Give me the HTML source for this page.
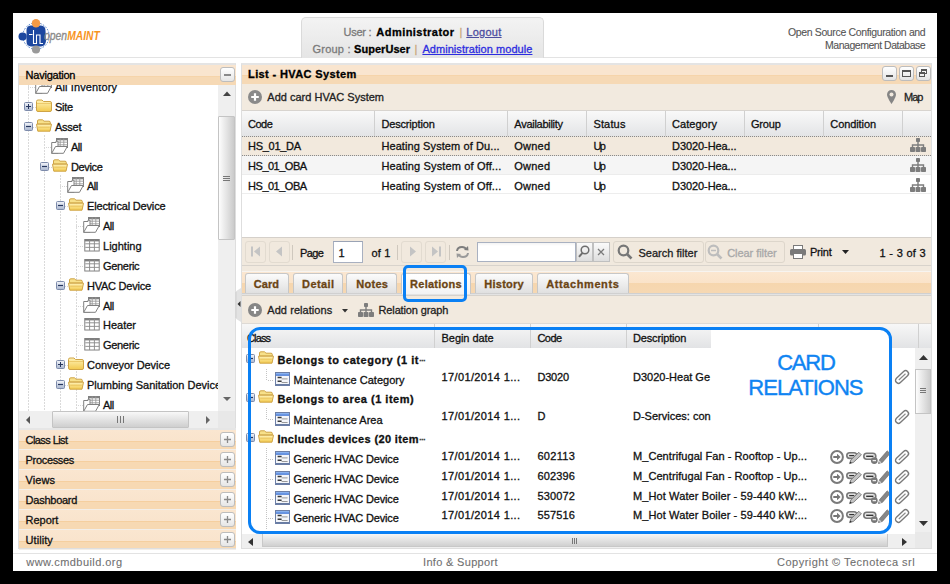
<!DOCTYPE html>
<html><head><meta charset="utf-8">
<style>
*{margin:0;padding:0;box-sizing:border-box}
html,body{width:950px;height:584px;overflow:hidden;background:#000}
body{font-family:"Liberation Sans",sans-serif;font-size:11px;color:#000;position:relative}
.a{position:absolute}
.t{position:absolute;white-space:nowrap;line-height:13px;-webkit-text-stroke:0.3px currentColor}
svg{position:absolute;overflow:visible}
</style></head><body>
<div class="a" style="left:13px;top:13px;width:924px;height:558px;background:#fff"></div>
<div class="a" style="left:13px;top:57px;width:924px;height:1px;background:#e3e3e3"></div>
<svg style="left:18px;top:18px" width="86" height="38" viewBox="0 0 86 38">
 <circle cx="18" cy="18" r="13.2" fill="none" stroke="#3a6fc0" stroke-width="0.9" stroke-dasharray="1.6 1.4"/>
 <path d="M8.5 12Q8.5 8 12.5 7.5L23 7.5Q27.5 8 27.5 12.5L28 23Q27.5 28 23 28.5L13 28.5Q8.5 28 8.5 23.5Z" fill="#1d48a0"/>
 <circle cx="18" cy="5.2" r="4.2" fill="#f39a45"/>
 <circle cx="4.6" cy="18.5" r="4.1" fill="#1d48a0"/>
 <circle cx="18" cy="31.5" r="4.1" fill="#9a9a9a"/>
 <path d="M11 16.5H14.5M15.5 12V25.5H18.5V17H22V25.5H25" fill="none" stroke="#fff" stroke-width="1.1"/>
 <text x="26" y="22" font-family="Liberation Sans" font-style="italic" font-size="12.5" fill="#8c8c8c" stroke="#8c8c8c" stroke-width="0.35" textLength="23" lengthAdjust="spacingAndGlyphs">open</text>
 <text x="49.3" y="22" font-family="Liberation Sans" font-style="italic" font-weight="bold" font-size="12.5" fill="#f7941e" textLength="32.5" lengthAdjust="spacingAndGlyphs">MAINT</text>
</svg>
<div class="a" style="left:301px;top:17px;width:243px;height:41px;border:1px solid #dadada;border-bottom:none;border-radius:5px 5px 0 0;background:linear-gradient(#f3f3f3,#e5e5e5)"></div>
<div class="t" style="left:343.50px;top:26.00px;font-size:11px;color:#7a7a7a;letter-spacing:-0.267px;">User :</div>
<div class="t" style="left:376.30px;top:26.00px;font-size:11px;color:#000;letter-spacing:0.465px;font-weight:bold;">Administrator</div>
<div class="t" style="left:459.50px;top:26.00px;font-size:11px;color:#c9a77a;">|</div>
<div class="t" style="left:466.30px;top:26.00px;font-size:11px;color:#4d4da0;letter-spacing:0.272px;text-decoration:underline">Logout</div>
<div class="t" style="left:312.60px;top:43.00px;font-size:11px;color:#7a7a7a;letter-spacing:0.203px;">Group :</div>
<div class="t" style="left:354.00px;top:43.00px;font-size:11px;color:#000;letter-spacing:0.046px;font-weight:bold;">SuperUser</div>
<div class="t" style="left:414.50px;top:43.00px;font-size:11px;color:#c9a77a;">|</div>
<div class="t" style="left:422.40px;top:43.00px;font-size:11px;color:#2d2de0;letter-spacing:0.059px;text-decoration:underline">Administration module</div>
<div class="t" style="left:787.90px;top:26.00px;font-size:10.5px;color:#555;letter-spacing:-0.353px;-webkit-text-stroke:0.1px currentColor">Open Source Configuration and</div>
<div class="t" style="left:825.00px;top:39.00px;font-size:10.5px;color:#555;letter-spacing:-0.469px;-webkit-text-stroke:0.1px currentColor">Management Database</div>
<div class="a" style="left:18px;top:63px;width:218px;height:486px;border:1px solid #dedede;border-top:2px solid #e4e4e4;background:#fff"></div>
<div class="a" style="left:19px;top:65px;width:217px;height:20px;background:linear-gradient(#f9e5cf 0,#f9e5cf 11px,#f5cf9f 11px,#f6d9b5 12px,#f6d9b5 20px)"></div>
<div class="t" style="left:25.60px;top:69.00px;font-size:11px;color:#000;letter-spacing:-0.241px;">Navigation</div>
<div class="a" style="left:220px;top:67px;width:15px;height:15px;border:1px solid #bdbdbd;border-radius:3px;background:linear-gradient(#fff,#e6e6e6)"><div class="a" style="left:3px;top:6px;width:7px;height:2px;background:#8a8a8a"></div></div>
<div class="a" style="left:241px;top:63px;width:691px;height:486px;border:1px solid #dedede;border-top:2px solid #e4e4e4;background:#fff"></div>
<div class="a" style="left:242px;top:65px;width:689px;height:19px;background:linear-gradient(#f9e5cf 0,#f9e5cf 10px,#f5cf9f 10px,#f6d9b5 11px,#f6d9b5 19px,#f3dcc0 20px)"></div>
<div class="t" style="left:248.10px;top:68.00px;font-size:11px;color:#000;letter-spacing:0.372px;font-weight:bold;">List - HVAC System</div>
<div class="a" style="left:882px;top:66px;width:15px;height:15px;border:1px solid #bdbdbd;border-radius:3px;background:linear-gradient(#fff,#e4e4e4)"></div>
<div class="a" style="left:899px;top:66px;width:15px;height:15px;border:1px solid #bdbdbd;border-radius:3px;background:linear-gradient(#fff,#e4e4e4)"></div>
<div class="a" style="left:916px;top:66px;width:15px;height:15px;border:1px solid #bdbdbd;border-radius:3px;background:linear-gradient(#fff,#e4e4e4)"></div>
<div class="a" style="left:886px;top:75px;width:7px;height:2px;background:#555"></div>
<div class="a" style="left:902px;top:70px;width:9px;height:7px;border:1px solid #555;border-top-width:2px"></div>
<div class="a" style="left:921px;top:69px;width:6px;height:5px;border:1px solid #555;border-top-width:2px"></div>
<div class="a" style="left:919px;top:72px;width:6px;height:5px;border:1px solid #555;border-top-width:2px;background:#eee"></div>
<div class="a" style="left:242px;top:84px;width:689px;height:27px;background:#f2eadf;border-bottom:1px solid #d8d4cf"></div>
<svg style="left:248px;top:90px" width="14" height="14"><circle cx="7" cy="7" r="7" fill="#8a8a8a"/><path d="M7 3.2V10.8M3.2 7H10.8" stroke="#fff" stroke-width="2.2"/></svg>
<div class="t" style="left:267.30px;top:91.00px;font-size:11px;color:#222;letter-spacing:0.008px;">Add card HVAC System</div>
<svg style="left:887px;top:90px" width="9" height="14" viewBox="0 0 9 14"><path d="M4.5 0C2 0 0 2 0 4.5C0 7.5 4.5 14 4.5 14S9 7.5 9 4.5C9 2 7 0 4.5 0Z" fill="#858585"/><circle cx="4.5" cy="4.5" r="2" fill="#f1e9de"/></svg>
<div class="t" style="left:904.00px;top:91.00px;font-size:11px;color:#222;letter-spacing:-0.998px;">Map</div>
<svg width="0" height="0" style="left:0;top:0"><defs>
<linearGradient id="gexp" x1="0" y1="0" x2="0" y2="1"><stop offset="0" stop-color="#f4f6fb"/><stop offset="1" stop-color="#a9b6cf"/></linearGradient>
<linearGradient id="gfold" x1="0" y1="0" x2="0" y2="1"><stop offset="0" stop-color="#fff3b8"/><stop offset="1" stop-color="#f2c94e"/></linearGradient>
<linearGradient id="gthumbv" x1="0" y1="0" x2="1" y2="0"><stop offset="0" stop-color="#fbfbfb"/><stop offset="1" stop-color="#cfcfcf"/></linearGradient>
<symbol id="plus" viewBox="0 0 9 9"><rect x="0.5" y="0.5" width="8" height="8" rx="1" fill="url(#gexp)" stroke="#7d8bab"/><path d="M2 4.5H7M4.5 2V7" stroke="#26365f" stroke-width="1"/></symbol>
<symbol id="minus" viewBox="0 0 9 9"><rect x="0.5" y="0.5" width="8" height="8" rx="1" fill="url(#gexp)" stroke="#7d8bab"/><path d="M2 4.5H7" stroke="#26365f" stroke-width="1.2"/></symbol>
<symbol id="fclosed" viewBox="0 0 16 13"><path d="M0.5 2.5Q0.5 1 2 1H6L7.5 2.5H14Q15.5 2.5 15.5 4V11Q15.5 12.5 14 12.5H2Q0.5 12.5 0.5 11Z" fill="url(#gfold)" stroke="#cfa446"/><path d="M1 4.5H15" stroke="#e9c360" stroke-width="0.8"/></symbol>
<symbol id="fopen" viewBox="0 0 16 13"><path d="M1.5 2Q1.5 0.8 2.8 0.8H6.5L8 2.2H13Q14.3 2.2 14.3 3.5V5H1.5Z" fill="#f7e08a" stroke="#cfa446"/><path d="M0.5 5.2H15.5L14 12.2H1.8Z" fill="url(#gfold)" stroke="#cfa446" stroke-linejoin="round"/><path d="M2.2 8.2H13.8" stroke="#e6bc50" stroke-width="0.8"/></symbol>
<symbol id="allic" viewBox="0 0 17 16"><rect x="5.5" y="0.5" width="11" height="9" fill="#fff" stroke="#808080"/><path d="M5.5 1.6H16.5" stroke="#808080" stroke-width="1.4"/><path d="M9.2 0.5V9.5M12.8 0.5V9.5M5.5 4.2H16.5M5.5 6.8H16.5" stroke="#9a9a9a" stroke-width="0.9"/><path d="M0.7 4.5H5V3.2H7V15.3H0.7Z" fill="#fff" stroke="#808080"/><path d="M0.7 15.3L4.5 8.5H16.3L12.5 15.3Z" fill="#fff" stroke="#808080" stroke-linejoin="round"/></symbol>
<symbol id="gridic" viewBox="0 0 16 13"><rect x="0.5" y="0.5" width="15" height="12" fill="#fff" stroke="#7e7e7e"/><path d="M0.5 1.5H15.5" stroke="#7e7e7e" stroke-width="2"/><path d="M5.5 1V12.5M10.5 1V12.5M1 5H15.5M1 8.7H15.5" stroke="#8e8e8e" stroke-width="1"/></symbol>
<symbol id="cardic" viewBox="0 0 15 14"><linearGradient id="gcard" x1="0" y1="0" x2="0" y2="1"><stop offset="0" stop-color="#9cc0f4"/><stop offset="1" stop-color="#3a70d4"/></linearGradient><rect x="0.5" y="0.5" width="14" height="13" fill="#f4f6fa" stroke="#6d7fa6"/><rect x="1" y="1" width="13" height="2.8" fill="url(#gcard)"/><path d="M2.6 5.6H6.6M2.6 9.2H6.6" stroke="#3a3a3a" stroke-width="1.5"/><path d="M6.6 6.9H12.6M6.6 10.5H12.6" stroke="#9a9a9a" stroke-width="1"/><path d="M1 12.6H14" stroke="#5a6f9a" stroke-width="1"/></symbol>
<symbol id="hier" viewBox="0 0 16 14"><rect x="6" y="0" width="4" height="4" rx="0.8" fill="#7d7d7d"/><path d="M8 4V7M2.5 9V7H13.5V9M8 7V9" stroke="#7d7d7d" stroke-width="1.4" fill="none"/><rect x="0" y="9" width="5" height="5" rx="0.8" fill="#7d7d7d"/><rect x="5.5" y="9" width="5" height="5" rx="0.8" fill="#7d7d7d"/><rect x="11" y="9" width="5" height="5" rx="0.8" fill="#7d7d7d"/></symbol>
<symbol id="plusc" viewBox="0 0 14 14"><circle cx="7" cy="7" r="7" fill="#868686"/><path d="M7 3.3V10.7M3.3 7H10.7" stroke="#fff" stroke-width="2.2"/></symbol>
<symbol id="clip" viewBox="0 0 14 14"><g transform="rotate(-43 7 7)"><rect x="-0.8" y="4.1" width="15.6" height="5.8" rx="2.9" fill="#fff" stroke="#7a7a7a" stroke-width="1.4"/><path d="M2.6 7H11.8" stroke="#8a8a8a" stroke-width="1.1"/></g></symbol>
<symbol id="goic" viewBox="0 0 14 14"><circle cx="7" cy="7" r="5.9" fill="#fff" stroke="#7a7a7a" stroke-width="2"/><path d="M3.3 6.1H7V3.8L10.6 7L7 10.2V7.9H3.3Z" fill="#767676"/></symbol>
<symbol id="linkedit" viewBox="0 0 16 14"><rect x="0.8" y="2.8" width="10" height="5.6" rx="2.8" fill="#e6e6e6" stroke="#777" stroke-width="1.6"/><path d="M3.2 5.6H8.3" stroke="#333" stroke-width="1.3"/><path d="M3.6 13.6L4.8 10L12.8 2.3L15.4 4.9L7.4 12.4Z" fill="#c4c4c4" stroke="#777" stroke-width="0.9" stroke-linejoin="round"/><path d="M3.6 13.6L4.3 11.4L5.9 12.9Z" fill="#2e2e2e"/></symbol>
<symbol id="linkdel" viewBox="0 0 15 14"><rect x="0.8" y="3.3" width="12" height="6" rx="3" fill="#e6e6e6" stroke="#777" stroke-width="1.6"/><path d="M3.2 6.3H10.4" stroke="#333" stroke-width="1.4"/><circle cx="11.3" cy="10.6" r="3.4" fill="#777"/><path d="M9.6 10.6H13" stroke="#eee" stroke-width="1.3"/></symbol>
<symbol id="pencil" viewBox="0 0 12 14"><path d="M0.5 13.5L1.6 9.6L9.2 0.8L12 3.6L4.4 12.4Z" fill="#878787" stroke="#6a6a6a" stroke-width="0.6" stroke-linejoin="round"/><path d="M0.6 13.4L1.4 10.6L3.4 12.6Z" fill="#d8d8d8"/><path d="M0.5 13.5L1 12.2L1.8 13Z" fill="#333"/></symbol>
</defs></svg>
<div class="a" style="left:242px;top:111px;width:689px;height:25px;background:linear-gradient(#f9f9f9,#e3e4e6);"></div>
<div class="a" style="left:374px;top:111px;width:1px;height:25px;background:#d0d0d0"></div>
<div class="a" style="left:507px;top:111px;width:1px;height:25px;background:#d0d0d0"></div>
<div class="a" style="left:586px;top:111px;width:1px;height:25px;background:#d0d0d0"></div>
<div class="a" style="left:665px;top:111px;width:1px;height:25px;background:#d0d0d0"></div>
<div class="a" style="left:744px;top:111px;width:1px;height:25px;background:#d0d0d0"></div>
<div class="a" style="left:823px;top:111px;width:1px;height:25px;background:#d0d0d0"></div>
<div class="a" style="left:902px;top:111px;width:1px;height:25px;background:#d0d0d0"></div>
<div class="t" style="left:248.10px;top:118.00px;font-size:11px;color:#111;letter-spacing:-0.532px;">Code</div>
<div class="t" style="left:381.40px;top:118.00px;font-size:11px;color:#111;letter-spacing:-0.162px;">Description</div>
<div class="t" style="left:514.30px;top:118.00px;font-size:11px;color:#111;letter-spacing:-0.279px;">Availability</div>
<div class="t" style="left:593.40px;top:118.00px;font-size:11px;color:#111;letter-spacing:0.163px;">Status</div>
<div class="t" style="left:672.10px;top:118.00px;font-size:11px;color:#111;letter-spacing:0.024px;">Category</div>
<div class="t" style="left:750.90px;top:118.00px;font-size:11px;color:#111;letter-spacing:-0.142px;">Group</div>
<div class="t" style="left:830.30px;top:118.00px;font-size:11px;color:#111;letter-spacing:-0.084px;">Condition</div>
<div class="a" style="left:242px;top:136px;width:689px;height:1px;background:repeating-linear-gradient(90deg,#8a8a8a 0 1px,#e8e2da 1px 2px)"></div>
<div class="a" style="left:242px;top:137px;width:689px;height:18px;background:#f2e9dd"></div>
<div class="a" style="left:242px;top:155px;width:689px;height:1px;background:repeating-linear-gradient(90deg,#8a8a8a 0 1px,#e8e2da 1px 2px)"></div>
<div class="a" style="left:242px;top:156px;width:689px;height:19px;background:#f5f5f5;border-bottom:1px solid #ececec"></div>
<div class="a" style="left:242px;top:175px;width:689px;height:19px;background:#fff;border-bottom:1px solid #ededed"></div>
<div class="t" style="left:248.10px;top:140.00px;font-size:11px;color:#111;letter-spacing:-0.304px;">HS_01_DA</div>
<div class="t" style="left:381.40px;top:140.00px;font-size:11px;color:#111;letter-spacing:0.093px;">Heating System of Du...</div>
<div class="t" style="left:514.30px;top:140.00px;font-size:11px;color:#111;letter-spacing:0.212px;">Owned</div>
<div class="t" style="left:593.40px;top:140.00px;font-size:11px;color:#111;letter-spacing:-1.461px;">Up</div>
<div class="t" style="left:672.10px;top:140.00px;font-size:11px;color:#111;letter-spacing:-0.084px;">D3020-Hea...</div>
<svg style="left:910px;top:138px" width="16" height="14" viewBox="0 0 16 14"><rect x="6" y="0" width="4" height="4" rx="0.8" fill="#7d7d7d"/><path d="M8 4V7M2.5 9V7H13.5V9M8 7V9" stroke="#7d7d7d" stroke-width="1.4" fill="none"/><rect x="0" y="9" width="5" height="5" rx="0.8" fill="#7d7d7d"/><rect x="5.5" y="9" width="5" height="5" rx="0.8" fill="#7d7d7d"/><rect x="11" y="9" width="5" height="5" rx="0.8" fill="#7d7d7d"/></svg>
<div class="t" style="left:248.10px;top:160.00px;font-size:11px;color:#111;letter-spacing:-0.498px;">HS_01_OBA</div>
<div class="t" style="left:381.40px;top:160.00px;font-size:11px;color:#111;letter-spacing:0.145px;">Heating System of Off...</div>
<div class="t" style="left:514.30px;top:160.00px;font-size:11px;color:#111;letter-spacing:0.212px;">Owned</div>
<div class="t" style="left:593.40px;top:160.00px;font-size:11px;color:#111;letter-spacing:-1.461px;">Up</div>
<div class="t" style="left:672.10px;top:160.00px;font-size:11px;color:#111;letter-spacing:-0.084px;">D3020-Hea...</div>
<svg style="left:910px;top:158px" width="16" height="14" viewBox="0 0 16 14"><rect x="6" y="0" width="4" height="4" rx="0.8" fill="#7d7d7d"/><path d="M8 4V7M2.5 9V7H13.5V9M8 7V9" stroke="#7d7d7d" stroke-width="1.4" fill="none"/><rect x="0" y="9" width="5" height="5" rx="0.8" fill="#7d7d7d"/><rect x="5.5" y="9" width="5" height="5" rx="0.8" fill="#7d7d7d"/><rect x="11" y="9" width="5" height="5" rx="0.8" fill="#7d7d7d"/></svg>
<div class="t" style="left:248.10px;top:180.00px;font-size:11px;color:#111;letter-spacing:-0.498px;">HS_01_OBA</div>
<div class="t" style="left:381.40px;top:180.00px;font-size:11px;color:#111;letter-spacing:0.145px;">Heating System of Off...</div>
<div class="t" style="left:514.30px;top:180.00px;font-size:11px;color:#111;letter-spacing:0.212px;">Owned</div>
<div class="t" style="left:593.40px;top:180.00px;font-size:11px;color:#111;letter-spacing:-1.461px;">Up</div>
<div class="t" style="left:672.10px;top:180.00px;font-size:11px;color:#111;letter-spacing:-0.084px;">D3020-Hea...</div>
<svg style="left:910px;top:178px" width="16" height="14" viewBox="0 0 16 14"><rect x="6" y="0" width="4" height="4" rx="0.8" fill="#7d7d7d"/><path d="M8 4V7M2.5 9V7H13.5V9M8 7V9" stroke="#7d7d7d" stroke-width="1.4" fill="none"/><rect x="0" y="9" width="5" height="5" rx="0.8" fill="#7d7d7d"/><rect x="5.5" y="9" width="5" height="5" rx="0.8" fill="#7d7d7d"/><rect x="11" y="9" width="5" height="5" rx="0.8" fill="#7d7d7d"/></svg>
<div class="a" style="left:242px;top:237px;width:689px;height:1px;background:#d5d0ca"></div>
<div class="a" style="left:242px;top:238px;width:689px;height:33px;background:#f1e9de"></div>
<div class="a" style="left:242px;top:265px;width:689px;height:1px;background:#d8d3cc"></div>
<div class="a" style="left:244.5px;top:241px;width:21px;height:22px;border:1px solid #e2dbd0;border-radius:3px;"></div>
<div class="a" style="left:268.5px;top:241px;width:21px;height:22px;border:1px solid #e2dbd0;border-radius:3px;"></div>
<svg style="left:251px;top:246px" width="10" height="11"><rect x="0" y="0.5" width="2" height="10" fill="#c4c4c4"/><path d="M9 0.5V10.5L3 5.5Z" fill="#c4c4c4"/></svg>
<svg style="left:275px;top:246px" width="10" height="11"><path d="M7 0.5V10.5L1 5.5Z" fill="#c4c4c4"/></svg>
<div class="a" style="left:292px;top:245px;width:1px;height:15px;background:#cfc8be"></div>
<div class="t" style="left:300.10px;top:247.00px;font-size:11px;color:#111;letter-spacing:-0.629px;">Page</div>
<div class="a" style="left:333px;top:241px;width:30px;height:22px;background:linear-gradient(#fff,#fff);border:1px solid #a8b0c0;border-top-color:#9aa3b5"></div>
<div class="t" style="left:338.50px;top:247.00px;font-size:11px;color:#111;">1</div>
<div class="t" style="left:371.40px;top:247.00px;font-size:11px;color:#111;letter-spacing:0.185px;">of 1</div>
<div class="a" style="left:397px;top:245px;width:1px;height:15px;background:#cfc8be"></div>
<div class="a" style="left:401px;top:241px;width:21px;height:22px;border:1px solid #e2dbd0;border-radius:3px;"></div>
<div class="a" style="left:425px;top:241px;width:21px;height:22px;border:1px solid #e2dbd0;border-radius:3px;"></div>
<svg style="left:408px;top:246px" width="10" height="11"><path d="M2 0.5V10.5L8 5.5Z" fill="#c4c4c4"/></svg>
<svg style="left:431px;top:246px" width="10" height="11"><path d="M1 0.5V10.5L7 5.5Z" fill="#c4c4c4"/><rect x="8" y="0.5" width="2" height="10" fill="#c4c4c4"/></svg>
<div class="a" style="left:449px;top:245px;width:1px;height:15px;background:#cfc8be"></div>
<svg style="left:455px;top:245px" width="15" height="14" viewBox="0 0 15 14"><path d="M2 6Q2.5 2 7 2Q10 2 11.5 4.5" fill="none" stroke="#7d7d7d" stroke-width="2"/><path d="M9 5L13.5 5.5L13 1Z" fill="#7d7d7d"/><path d="M13 8Q12.5 12 8 12Q5 12 3.5 9.5" fill="none" stroke="#9a9a9a" stroke-width="2"/><path d="M6 9L1.5 8.5L2 13Z" fill="#9a9a9a"/></svg>
<div class="a" style="left:477px;top:242px;width:99px;height:20px;background:linear-gradient(#f3f3f3 0,#fff 3px);border:1px solid #a9b1c1"></div>
<div class="a" style="left:575.5px;top:242px;width:17px;height:20px;background:linear-gradient(#fafafa,#dedede);border:1px solid #c0c0c0"></div>
<svg style="left:578px;top:245px" width="12" height="13" viewBox="0 0 12 13"><circle cx="7" cy="5" r="3.8" fill="none" stroke="#6e6e6e" stroke-width="1.5"/><path d="M4.5 7.8L1 11.8" stroke="#6e6e6e" stroke-width="2"/></svg>
<div class="a" style="left:592.5px;top:242px;width:17px;height:20px;background:linear-gradient(#fafafa,#dedede);border:1px solid #c0c0c0"></div>
<svg style="left:597px;top:248px" width="8" height="8"><path d="M1 1L7 7M7 1L1 7" stroke="#7a7a7a" stroke-width="1.3"/></svg>
<div class="a" style="left:612.5px;top:241px;width:91px;height:22px;border:1px solid #ddd6cb;border-radius:3px"></div>
<svg style="left:617px;top:244px" width="16" height="16" viewBox="0 0 16 16"><circle cx="6.5" cy="6.5" r="4.8" fill="none" stroke="#777" stroke-width="2.2"/><path d="M10 10L14.5 14.5" stroke="#777" stroke-width="2.6"/></svg>
<div class="t" style="left:638.40px;top:247.00px;font-size:11px;color:#222;letter-spacing:0.018px;">Search filter</div>
<div class="a" style="left:704.5px;top:241px;width:80px;height:22px;border:1px solid #ddd6cb;border-radius:3px"></div>
<svg style="left:707px;top:244px" width="16" height="16" viewBox="0 0 16 16"><circle cx="6.5" cy="6.5" r="4.8" fill="none" stroke="#bdbdbd" stroke-width="2.2"/><path d="M10 10L14.5 14.5" stroke="#bdbdbd" stroke-width="2.6"/><path d="M4 6.5H9" stroke="#bdbdbd" stroke-width="1.5"/></svg>
<div class="t" style="left:727.20px;top:247.00px;font-size:11px;color:#a8a8a8;letter-spacing:-0.056px;">Clear filter</div>
<svg style="left:790px;top:245px" width="16" height="14" viewBox="0 0 16 14"><rect x="3.5" y="0.5" width="9" height="4" fill="#fff" stroke="#7a7a7a"/><rect x="0" y="4" width="16" height="6.5" rx="1.5" fill="#7a7a7a"/><rect x="3.5" y="8.5" width="9" height="5" fill="#fff" stroke="#7a7a7a"/></svg>
<div class="t" style="left:810.00px;top:246.00px;font-size:11px;color:#111;letter-spacing:-0.229px;">Print</div>
<svg style="left:842px;top:250px" width="7" height="4"><path d="M0 0H7L3.5 4Z" fill="#222"/></svg>
<div class="t" style="left:879.50px;top:247.00px;font-size:11px;color:#111;letter-spacing:0.310px;">1 - 3 of 3</div>
<div class="a" style="left:242px;top:271px;width:689px;height:1px;background:#f7f4f0"></div>
<div class="a" style="left:242px;top:272px;width:689px;height:21px;background:linear-gradient(#fbe7d1 0,#fae3c9 11px,#f6d6ae 11px,#f6d8b3 100%)"></div>
<div class="a" style="left:242px;top:293px;width:689px;height:3px;background:#e3e3e3;border-top:1px solid #d0d0d0;border-bottom:1px solid #d6d2cc"></div>
<div class="a" style="left:244.6px;top:273px;width:44.20000000000002px;height:20px;background:linear-gradient(#fbfbfb,#e0e0e0);border:1px solid #c7c7c7;border-bottom:none;border-radius:3px 3px 0 0"></div>
<div class="t" style="left:253.70px;top:278.00px;font-size:11px;color:#6b4514;letter-spacing:0.080px;font-weight:bold;">Card</div>
<div class="a" style="left:292.6px;top:273px;width:50.599999999999966px;height:20px;background:linear-gradient(#fbfbfb,#e0e0e0);border:1px solid #c7c7c7;border-bottom:none;border-radius:3px 3px 0 0"></div>
<div class="t" style="left:302.10px;top:278.00px;font-size:11px;color:#6b4514;letter-spacing:0.409px;font-weight:bold;">Detail</div>
<div class="a" style="left:346.3px;top:273px;width:51.0px;height:20px;background:linear-gradient(#fbfbfb,#e0e0e0);border:1px solid #c7c7c7;border-bottom:none;border-radius:3px 3px 0 0"></div>
<div class="t" style="left:356.20px;top:278.00px;font-size:11px;color:#6b4514;letter-spacing:0.310px;font-weight:bold;">Notes</div>
<div class="a" style="left:401px;top:273px;width:70px;height:21px;background:linear-gradient(#ffffff,#f3f3f3);border:1px solid #c7c7c7;border-bottom:none;border-radius:3px 3px 0 0"></div>
<div class="t" style="left:410.10px;top:278.00px;font-size:11px;color:#6b4514;letter-spacing:0.249px;font-weight:bold;">Relations</div>
<div class="a" style="left:474.8px;top:273px;width:58.400000000000034px;height:20px;background:linear-gradient(#fbfbfb,#e0e0e0);border:1px solid #c7c7c7;border-bottom:none;border-radius:3px 3px 0 0"></div>
<div class="t" style="left:484.30px;top:278.00px;font-size:11px;color:#6b4514;letter-spacing:0.251px;font-weight:bold;">History</div>
<div class="a" style="left:537px;top:273px;width:92px;height:20px;background:linear-gradient(#fbfbfb,#e0e0e0);border:1px solid #c7c7c7;border-bottom:none;border-radius:3px 3px 0 0"></div>
<div class="t" style="left:546.20px;top:278.00px;font-size:11px;color:#6b4514;letter-spacing:0.598px;font-weight:bold;">Attachments</div>
<div class="a" style="left:242px;top:296px;width:689px;height:28px;background:#f2eadf;border-bottom:1px solid #dedad5"></div>
<svg style="left:248px;top:303px" width="14" height="14" viewBox="0 0 14 14"><circle cx="7" cy="7" r="7" fill="#868686"/><path d="M7 3.3V10.7M3.3 7H10.7" stroke="#fff" stroke-width="2.2"/></svg>
<div class="t" style="left:267.30px;top:304.00px;font-size:11px;color:#222;letter-spacing:0.058px;">Add relations</div>
<svg style="left:342px;top:309px" width="6" height="4"><path d="M0 0H6L3 3.5Z" fill="#333"/></svg>
<svg style="left:358px;top:302.5px" width="16" height="14" viewBox="0 0 16 14"><rect x="6" y="0" width="4" height="4" rx="0.8" fill="#7d7d7d"/><path d="M8 4V7M2.5 9V7H13.5V9M8 7V9" stroke="#7d7d7d" stroke-width="1.4" fill="none"/><rect x="0" y="9" width="5" height="5" rx="0.8" fill="#7d7d7d"/><rect x="5.5" y="9" width="5" height="5" rx="0.8" fill="#7d7d7d"/><rect x="11" y="9" width="5" height="5" rx="0.8" fill="#7d7d7d"/></svg>
<div class="t" style="left:378.50px;top:304.00px;font-size:11px;color:#222;letter-spacing:-0.126px;">Relation graph</div>
<div class="a" style="left:242px;top:324px;width:689px;height:224px;background:#fff"></div>
<div class="a" style="left:242px;top:324px;width:689px;height:24px;background:linear-gradient(#f7f7f7,#e2e3e5)"></div>
<div class="a" style="left:434px;top:324px;width:1px;height:24px;background:#d0d0d0"></div>
<div class="a" style="left:530px;top:324px;width:1px;height:24px;background:#d0d0d0"></div>
<div class="a" style="left:626px;top:324px;width:1px;height:24px;background:#d0d0d0"></div>
<div class="a" style="left:818px;top:324px;width:1px;height:24px;background:#d0d0d0"></div>
<div class="a" style="left:918px;top:324px;width:1px;height:24px;background:#d0d0d0"></div>
<div class="t" style="left:247.00px;top:332.00px;font-size:11px;color:#111;letter-spacing:-0.876px;">Class</div>
<div class="t" style="left:441.60px;top:332.00px;font-size:11px;color:#111;letter-spacing:-0.066px;">Begin date</div>
<div class="t" style="left:537.40px;top:332.00px;font-size:11px;color:#111;letter-spacing:-0.532px;">Code</div>
<div class="t" style="left:633.00px;top:332.00px;font-size:11px;color:#111;letter-spacing:-0.162px;">Description</div>
<div class="a" style="left:266px;top:369px;width:1px;height:12px;background:repeating-linear-gradient(#c4c4c4 0 1px,transparent 1px 2px)"></div>
<div class="a" style="left:266px;top:408px;width:1px;height:12px;background:repeating-linear-gradient(#c4c4c4 0 1px,transparent 1px 2px)"></div>
<div class="a" style="left:266px;top:448px;width:1px;height:82px;background:repeating-linear-gradient(#c4c4c4 0 1px,transparent 1px 2px)"></div>
<div class="a" style="left:268px;top:380px;width:6px;height:1px;background:repeating-linear-gradient(90deg,#c4c4c4 0 1px,transparent 1px 2px)"></div>
<div class="a" style="left:268px;top:419px;width:6px;height:1px;background:repeating-linear-gradient(90deg,#c4c4c4 0 1px,transparent 1px 2px)"></div>
<div class="a" style="left:268px;top:459px;width:6px;height:1px;background:repeating-linear-gradient(90deg,#c4c4c4 0 1px,transparent 1px 2px)"></div>
<div class="a" style="left:268px;top:479px;width:6px;height:1px;background:repeating-linear-gradient(90deg,#c4c4c4 0 1px,transparent 1px 2px)"></div>
<div class="a" style="left:268px;top:499px;width:6px;height:1px;background:repeating-linear-gradient(90deg,#c4c4c4 0 1px,transparent 1px 2px)"></div>
<div class="a" style="left:268px;top:518px;width:6px;height:1px;background:repeating-linear-gradient(90deg,#c4c4c4 0 1px,transparent 1px 2px)"></div>
<svg style="left:246px;top:354px" width="9" height="9" viewBox="0 0 9 9"><rect x="0.5" y="0.5" width="8" height="8" rx="1" fill="url(#gexp)" stroke="#7d8bab"/><path d="M2 4.5H7" stroke="#26365f" stroke-width="1.2"/></svg>
<svg style="left:258px;top:351px" width="16" height="13" viewBox="0 0 16 13"><path d="M1.5 2Q1.5 0.8 2.8 0.8H6.5L8 2.2H13Q14.3 2.2 14.3 3.5V5H1.5Z" fill="#f7e08a" stroke="#cfa446"/><path d="M0.5 5.2H15.5L14 12.2H1.8Z" fill="url(#gfold)" stroke="#cfa446" stroke-linejoin="round"/><path d="M2.2 8.2H13.8" stroke="#e6bc50" stroke-width="0.8"/></svg>
<div class="t" style="left:277.40px;top:354.00px;font-size:11px;color:#111;letter-spacing:0.527px;font-weight:bold;">Belongs to category (1 it</div>
<svg style="left:246px;top:393px" width="9" height="9" viewBox="0 0 9 9"><rect x="0.5" y="0.5" width="8" height="8" rx="1" fill="url(#gexp)" stroke="#7d8bab"/><path d="M2 4.5H7" stroke="#26365f" stroke-width="1.2"/></svg>
<svg style="left:258px;top:390px" width="16" height="13" viewBox="0 0 16 13"><path d="M1.5 2Q1.5 0.8 2.8 0.8H6.5L8 2.2H13Q14.3 2.2 14.3 3.5V5H1.5Z" fill="#f7e08a" stroke="#cfa446"/><path d="M0.5 5.2H15.5L14 12.2H1.8Z" fill="url(#gfold)" stroke="#cfa446" stroke-linejoin="round"/><path d="M2.2 8.2H13.8" stroke="#e6bc50" stroke-width="0.8"/></svg>
<div class="t" style="left:277.40px;top:393.00px;font-size:11px;color:#111;letter-spacing:0.501px;font-weight:bold;">Belongs to area (1 item)</div>
<svg style="left:246px;top:432.5px" width="9" height="9" viewBox="0 0 9 9"><rect x="0.5" y="0.5" width="8" height="8" rx="1" fill="url(#gexp)" stroke="#7d8bab"/><path d="M2 4.5H7" stroke="#26365f" stroke-width="1.2"/></svg>
<svg style="left:258px;top:429.5px" width="16" height="13" viewBox="0 0 16 13"><path d="M1.5 2Q1.5 0.8 2.8 0.8H6.5L8 2.2H13Q14.3 2.2 14.3 3.5V5H1.5Z" fill="#f7e08a" stroke="#cfa446"/><path d="M0.5 5.2H15.5L14 12.2H1.8Z" fill="url(#gfold)" stroke="#cfa446" stroke-linejoin="round"/><path d="M2.2 8.2H13.8" stroke="#e6bc50" stroke-width="0.8"/></svg>
<div class="t" style="left:277.40px;top:432.50px;font-size:11px;color:#111;letter-spacing:0.348px;font-weight:bold;">Includes devices (20 item</div>
<div class="t" style="left:418.60px;top:354.00px;font-size:11px;color:#333;letter-spacing:-1.744px;">···</div>
<div class="t" style="left:418.60px;top:432.50px;font-size:11px;color:#333;letter-spacing:-1.744px;">···</div>
<svg style="left:274.6px;top:372px" width="15" height="14" viewBox="0 0 15 14"><linearGradient id="gcard" x1="0" y1="0" x2="0" y2="1"><stop offset="0" stop-color="#9cc0f4"/><stop offset="1" stop-color="#3a70d4"/></linearGradient><rect x="0.5" y="0.5" width="14" height="13" fill="#f4f6fa" stroke="#6d7fa6"/><rect x="1" y="1" width="13" height="2.8" fill="url(#gcard)"/><path d="M2.6 5.6H6.6M2.6 9.2H6.6" stroke="#3a3a3a" stroke-width="1.5"/><path d="M6.6 6.9H12.6M6.6 10.5H12.6" stroke="#9a9a9a" stroke-width="1"/><path d="M1 12.6H14" stroke="#5a6f9a" stroke-width="1"/></svg>
<div class="t" style="left:293.60px;top:374.00px;font-size:11px;color:#111;letter-spacing:0.012px;">Maintenance Category</div>
<div class="t" style="left:441.60px;top:371.00px;font-size:11px;color:#111;letter-spacing:0.365px;">17/01/2014 1...</div>
<div class="t" style="left:537.40px;top:371.00px;font-size:11px;color:#111;letter-spacing:-0.203px;">D3020</div>
<div class="t" style="left:633.00px;top:371.00px;font-size:11px;color:#111;">D3020-Heat Ge</div>
<svg style="left:274.6px;top:411.5px" width="15" height="14" viewBox="0 0 15 14"><linearGradient id="gcard" x1="0" y1="0" x2="0" y2="1"><stop offset="0" stop-color="#9cc0f4"/><stop offset="1" stop-color="#3a70d4"/></linearGradient><rect x="0.5" y="0.5" width="14" height="13" fill="#f4f6fa" stroke="#6d7fa6"/><rect x="1" y="1" width="13" height="2.8" fill="url(#gcard)"/><path d="M2.6 5.6H6.6M2.6 9.2H6.6" stroke="#3a3a3a" stroke-width="1.5"/><path d="M6.6 6.9H12.6M6.6 10.5H12.6" stroke="#9a9a9a" stroke-width="1"/><path d="M1 12.6H14" stroke="#5a6f9a" stroke-width="1"/></svg>
<div class="t" style="left:293.60px;top:413.50px;font-size:11px;color:#111;letter-spacing:0.022px;">Maintenance Area</div>
<div class="t" style="left:441.60px;top:410.00px;font-size:11px;color:#111;letter-spacing:0.365px;">17/01/2014 1...</div>
<div class="t" style="left:537.40px;top:410.00px;font-size:11px;color:#111;">D</div>
<div class="t" style="left:633.00px;top:410.00px;font-size:11px;color:#111;">D-Services: con</div>
<svg style="left:274.6px;top:451px" width="15" height="14" viewBox="0 0 15 14"><linearGradient id="gcard" x1="0" y1="0" x2="0" y2="1"><stop offset="0" stop-color="#9cc0f4"/><stop offset="1" stop-color="#3a70d4"/></linearGradient><rect x="0.5" y="0.5" width="14" height="13" fill="#f4f6fa" stroke="#6d7fa6"/><rect x="1" y="1" width="13" height="2.8" fill="url(#gcard)"/><path d="M2.6 5.6H6.6M2.6 9.2H6.6" stroke="#3a3a3a" stroke-width="1.5"/><path d="M6.6 6.9H12.6M6.6 10.5H12.6" stroke="#9a9a9a" stroke-width="1"/><path d="M1 12.6H14" stroke="#5a6f9a" stroke-width="1"/></svg>
<div class="t" style="left:293.60px;top:453.00px;font-size:11px;color:#111;letter-spacing:-0.155px;">Generic HVAC Device</div>
<div class="t" style="left:441.60px;top:450.00px;font-size:11px;color:#111;letter-spacing:0.365px;">17/01/2014 1...</div>
<div class="t" style="left:537.40px;top:450.00px;font-size:11px;color:#111;letter-spacing:0.303px;">602113</div>
<div class="t" style="left:633.00px;top:450.00px;font-size:11px;color:#111;letter-spacing:0.065px;">M_Centrifugal Fan - Rooftop - Up...</div>
<svg style="left:830px;top:450px" width="14" height="14" viewBox="0 0 14 14"><circle cx="7" cy="7" r="5.9" fill="#fff" stroke="#7a7a7a" stroke-width="2"/><path d="M3.3 6.1H7V3.8L10.6 7L7 10.2V7.9H3.3Z" fill="#767676"/></svg>
<svg style="left:845.5px;top:450px" width="16" height="14" viewBox="0 0 16 14"><rect x="0.8" y="2.8" width="10" height="5.6" rx="2.8" fill="#e6e6e6" stroke="#777" stroke-width="1.6"/><path d="M3.2 5.6H8.3" stroke="#333" stroke-width="1.3"/><path d="M3.6 13.6L4.8 10L12.8 2.3L15.4 4.9L7.4 12.4Z" fill="#c4c4c4" stroke="#777" stroke-width="0.9" stroke-linejoin="round"/><path d="M3.6 13.6L4.3 11.4L5.9 12.9Z" fill="#2e2e2e"/></svg>
<svg style="left:862.5px;top:450px" width="15" height="14" viewBox="0 0 15 14"><rect x="0.8" y="3.3" width="12" height="6" rx="3" fill="#e6e6e6" stroke="#777" stroke-width="1.6"/><path d="M3.2 6.3H10.4" stroke="#333" stroke-width="1.4"/><circle cx="11.3" cy="10.6" r="3.4" fill="#777"/><path d="M9.6 10.6H13" stroke="#eee" stroke-width="1.3"/></svg>
<svg style="left:878px;top:450px" width="12" height="14" viewBox="0 0 12 14"><path d="M0.5 13.5L1.6 9.6L9.2 0.8L12 3.6L4.4 12.4Z" fill="#878787" stroke="#6a6a6a" stroke-width="0.6" stroke-linejoin="round"/><path d="M0.6 13.4L1.4 10.6L3.4 12.6Z" fill="#d8d8d8"/><path d="M0.5 13.5L1 12.2L1.8 13Z" fill="#333"/></svg>
<svg style="left:895px;top:450px" width="14" height="14" viewBox="0 0 14 14"><g transform="rotate(-43 7 7)"><rect x="-0.8" y="4.1" width="15.6" height="5.8" rx="2.9" fill="#fff" stroke="#7a7a7a" stroke-width="1.4"/><path d="M2.6 7H11.8" stroke="#8a8a8a" stroke-width="1.1"/></g></svg>
<svg style="left:274.6px;top:471px" width="15" height="14" viewBox="0 0 15 14"><linearGradient id="gcard" x1="0" y1="0" x2="0" y2="1"><stop offset="0" stop-color="#9cc0f4"/><stop offset="1" stop-color="#3a70d4"/></linearGradient><rect x="0.5" y="0.5" width="14" height="13" fill="#f4f6fa" stroke="#6d7fa6"/><rect x="1" y="1" width="13" height="2.8" fill="url(#gcard)"/><path d="M2.6 5.6H6.6M2.6 9.2H6.6" stroke="#3a3a3a" stroke-width="1.5"/><path d="M6.6 6.9H12.6M6.6 10.5H12.6" stroke="#9a9a9a" stroke-width="1"/><path d="M1 12.6H14" stroke="#5a6f9a" stroke-width="1"/></svg>
<div class="t" style="left:293.60px;top:473.00px;font-size:11px;color:#111;letter-spacing:-0.155px;">Generic HVAC Device</div>
<div class="t" style="left:441.60px;top:470.00px;font-size:11px;color:#111;letter-spacing:0.365px;">17/01/2014 1...</div>
<div class="t" style="left:537.40px;top:470.00px;font-size:11px;color:#111;letter-spacing:0.140px;">602396</div>
<div class="t" style="left:633.00px;top:470.00px;font-size:11px;color:#111;letter-spacing:0.065px;">M_Centrifugal Fan - Rooftop - Up...</div>
<svg style="left:830px;top:470px" width="14" height="14" viewBox="0 0 14 14"><circle cx="7" cy="7" r="5.9" fill="#fff" stroke="#7a7a7a" stroke-width="2"/><path d="M3.3 6.1H7V3.8L10.6 7L7 10.2V7.9H3.3Z" fill="#767676"/></svg>
<svg style="left:845.5px;top:470px" width="16" height="14" viewBox="0 0 16 14"><rect x="0.8" y="2.8" width="10" height="5.6" rx="2.8" fill="#e6e6e6" stroke="#777" stroke-width="1.6"/><path d="M3.2 5.6H8.3" stroke="#333" stroke-width="1.3"/><path d="M3.6 13.6L4.8 10L12.8 2.3L15.4 4.9L7.4 12.4Z" fill="#c4c4c4" stroke="#777" stroke-width="0.9" stroke-linejoin="round"/><path d="M3.6 13.6L4.3 11.4L5.9 12.9Z" fill="#2e2e2e"/></svg>
<svg style="left:862.5px;top:470px" width="15" height="14" viewBox="0 0 15 14"><rect x="0.8" y="3.3" width="12" height="6" rx="3" fill="#e6e6e6" stroke="#777" stroke-width="1.6"/><path d="M3.2 6.3H10.4" stroke="#333" stroke-width="1.4"/><circle cx="11.3" cy="10.6" r="3.4" fill="#777"/><path d="M9.6 10.6H13" stroke="#eee" stroke-width="1.3"/></svg>
<svg style="left:878px;top:470px" width="12" height="14" viewBox="0 0 12 14"><path d="M0.5 13.5L1.6 9.6L9.2 0.8L12 3.6L4.4 12.4Z" fill="#878787" stroke="#6a6a6a" stroke-width="0.6" stroke-linejoin="round"/><path d="M0.6 13.4L1.4 10.6L3.4 12.6Z" fill="#d8d8d8"/><path d="M0.5 13.5L1 12.2L1.8 13Z" fill="#333"/></svg>
<svg style="left:895px;top:470px" width="14" height="14" viewBox="0 0 14 14"><g transform="rotate(-43 7 7)"><rect x="-0.8" y="4.1" width="15.6" height="5.8" rx="2.9" fill="#fff" stroke="#7a7a7a" stroke-width="1.4"/><path d="M2.6 7H11.8" stroke="#8a8a8a" stroke-width="1.1"/></g></svg>
<svg style="left:274.6px;top:491px" width="15" height="14" viewBox="0 0 15 14"><linearGradient id="gcard" x1="0" y1="0" x2="0" y2="1"><stop offset="0" stop-color="#9cc0f4"/><stop offset="1" stop-color="#3a70d4"/></linearGradient><rect x="0.5" y="0.5" width="14" height="13" fill="#f4f6fa" stroke="#6d7fa6"/><rect x="1" y="1" width="13" height="2.8" fill="url(#gcard)"/><path d="M2.6 5.6H6.6M2.6 9.2H6.6" stroke="#3a3a3a" stroke-width="1.5"/><path d="M6.6 6.9H12.6M6.6 10.5H12.6" stroke="#9a9a9a" stroke-width="1"/><path d="M1 12.6H14" stroke="#5a6f9a" stroke-width="1"/></svg>
<div class="t" style="left:293.60px;top:493.00px;font-size:11px;color:#111;letter-spacing:-0.155px;">Generic HVAC Device</div>
<div class="t" style="left:441.60px;top:490.00px;font-size:11px;color:#111;letter-spacing:0.365px;">17/01/2014 1...</div>
<div class="t" style="left:537.40px;top:490.00px;font-size:11px;color:#111;letter-spacing:0.140px;">530072</div>
<div class="t" style="left:633.00px;top:490.00px;font-size:11px;color:#111;letter-spacing:0.105px;">M_Hot Water Boiler - 59-440 kW:...</div>
<svg style="left:830px;top:490px" width="14" height="14" viewBox="0 0 14 14"><circle cx="7" cy="7" r="5.9" fill="#fff" stroke="#7a7a7a" stroke-width="2"/><path d="M3.3 6.1H7V3.8L10.6 7L7 10.2V7.9H3.3Z" fill="#767676"/></svg>
<svg style="left:845.5px;top:490px" width="16" height="14" viewBox="0 0 16 14"><rect x="0.8" y="2.8" width="10" height="5.6" rx="2.8" fill="#e6e6e6" stroke="#777" stroke-width="1.6"/><path d="M3.2 5.6H8.3" stroke="#333" stroke-width="1.3"/><path d="M3.6 13.6L4.8 10L12.8 2.3L15.4 4.9L7.4 12.4Z" fill="#c4c4c4" stroke="#777" stroke-width="0.9" stroke-linejoin="round"/><path d="M3.6 13.6L4.3 11.4L5.9 12.9Z" fill="#2e2e2e"/></svg>
<svg style="left:862.5px;top:490px" width="15" height="14" viewBox="0 0 15 14"><rect x="0.8" y="3.3" width="12" height="6" rx="3" fill="#e6e6e6" stroke="#777" stroke-width="1.6"/><path d="M3.2 6.3H10.4" stroke="#333" stroke-width="1.4"/><circle cx="11.3" cy="10.6" r="3.4" fill="#777"/><path d="M9.6 10.6H13" stroke="#eee" stroke-width="1.3"/></svg>
<svg style="left:878px;top:490px" width="12" height="14" viewBox="0 0 12 14"><path d="M0.5 13.5L1.6 9.6L9.2 0.8L12 3.6L4.4 12.4Z" fill="#878787" stroke="#6a6a6a" stroke-width="0.6" stroke-linejoin="round"/><path d="M0.6 13.4L1.4 10.6L3.4 12.6Z" fill="#d8d8d8"/><path d="M0.5 13.5L1 12.2L1.8 13Z" fill="#333"/></svg>
<svg style="left:895px;top:490px" width="14" height="14" viewBox="0 0 14 14"><g transform="rotate(-43 7 7)"><rect x="-0.8" y="4.1" width="15.6" height="5.8" rx="2.9" fill="#fff" stroke="#7a7a7a" stroke-width="1.4"/><path d="M2.6 7H11.8" stroke="#8a8a8a" stroke-width="1.1"/></g></svg>
<svg style="left:274.6px;top:510px" width="15" height="14" viewBox="0 0 15 14"><linearGradient id="gcard" x1="0" y1="0" x2="0" y2="1"><stop offset="0" stop-color="#9cc0f4"/><stop offset="1" stop-color="#3a70d4"/></linearGradient><rect x="0.5" y="0.5" width="14" height="13" fill="#f4f6fa" stroke="#6d7fa6"/><rect x="1" y="1" width="13" height="2.8" fill="url(#gcard)"/><path d="M2.6 5.6H6.6M2.6 9.2H6.6" stroke="#3a3a3a" stroke-width="1.5"/><path d="M6.6 6.9H12.6M6.6 10.5H12.6" stroke="#9a9a9a" stroke-width="1"/><path d="M1 12.6H14" stroke="#5a6f9a" stroke-width="1"/></svg>
<div class="t" style="left:293.60px;top:512.00px;font-size:11px;color:#111;letter-spacing:-0.155px;">Generic HVAC Device</div>
<div class="t" style="left:441.60px;top:509.00px;font-size:11px;color:#111;letter-spacing:0.365px;">17/01/2014 1...</div>
<div class="t" style="left:537.40px;top:509.00px;font-size:11px;color:#111;letter-spacing:0.140px;">557516</div>
<div class="t" style="left:633.00px;top:509.00px;font-size:11px;color:#111;letter-spacing:0.105px;">M_Hot Water Boiler - 59-440 kW:...</div>
<svg style="left:830px;top:509px" width="14" height="14" viewBox="0 0 14 14"><circle cx="7" cy="7" r="5.9" fill="#fff" stroke="#7a7a7a" stroke-width="2"/><path d="M3.3 6.1H7V3.8L10.6 7L7 10.2V7.9H3.3Z" fill="#767676"/></svg>
<svg style="left:845.5px;top:509px" width="16" height="14" viewBox="0 0 16 14"><rect x="0.8" y="2.8" width="10" height="5.6" rx="2.8" fill="#e6e6e6" stroke="#777" stroke-width="1.6"/><path d="M3.2 5.6H8.3" stroke="#333" stroke-width="1.3"/><path d="M3.6 13.6L4.8 10L12.8 2.3L15.4 4.9L7.4 12.4Z" fill="#c4c4c4" stroke="#777" stroke-width="0.9" stroke-linejoin="round"/><path d="M3.6 13.6L4.3 11.4L5.9 12.9Z" fill="#2e2e2e"/></svg>
<svg style="left:862.5px;top:509px" width="15" height="14" viewBox="0 0 15 14"><rect x="0.8" y="3.3" width="12" height="6" rx="3" fill="#e6e6e6" stroke="#777" stroke-width="1.6"/><path d="M3.2 6.3H10.4" stroke="#333" stroke-width="1.4"/><circle cx="11.3" cy="10.6" r="3.4" fill="#777"/><path d="M9.6 10.6H13" stroke="#eee" stroke-width="1.3"/></svg>
<svg style="left:878px;top:509px" width="12" height="14" viewBox="0 0 12 14"><path d="M0.5 13.5L1.6 9.6L9.2 0.8L12 3.6L4.4 12.4Z" fill="#878787" stroke="#6a6a6a" stroke-width="0.6" stroke-linejoin="round"/><path d="M0.6 13.4L1.4 10.6L3.4 12.6Z" fill="#d8d8d8"/><path d="M0.5 13.5L1 12.2L1.8 13Z" fill="#333"/></svg>
<svg style="left:895px;top:509px" width="14" height="14" viewBox="0 0 14 14"><g transform="rotate(-43 7 7)"><rect x="-0.8" y="4.1" width="15.6" height="5.8" rx="2.9" fill="#fff" stroke="#7a7a7a" stroke-width="1.4"/><path d="M2.6 7H11.8" stroke="#8a8a8a" stroke-width="1.1"/></g></svg>
<svg style="left:895px;top:370px" width="14" height="14" viewBox="0 0 14 14"><g transform="rotate(-43 7 7)"><rect x="-0.8" y="4.1" width="15.6" height="5.8" rx="2.9" fill="#fff" stroke="#7a7a7a" stroke-width="1.4"/><path d="M2.6 7H11.8" stroke="#8a8a8a" stroke-width="1.1"/></g></svg>
<svg style="left:895px;top:409.5px" width="14" height="14" viewBox="0 0 14 14"><g transform="rotate(-43 7 7)"><rect x="-0.8" y="4.1" width="15.6" height="5.8" rx="2.9" fill="#fff" stroke="#7a7a7a" stroke-width="1.4"/><path d="M2.6 7H11.8" stroke="#8a8a8a" stroke-width="1.1"/></g></svg>
<div class="a" style="left:242px;top:529px;width:689px;height:5px;background:#fff"></div>
<div class="a" style="left:711px;top:330px;width:178px;height:100px;background:#fff"></div>
<div class="t" style="left:777.20px;top:356.00px;font-size:22px;color:#0f84f2;letter-spacing:-1.246px;-webkit-text-stroke:0.4px currentColor">CARD</div>
<div class="t" style="left:748.30px;top:381.00px;font-size:22px;color:#0f84f2;letter-spacing:-0.983px;-webkit-text-stroke:0.4px currentColor">RELATIONS</div>
<div class="a" style="left:248px;top:327px;width:644px;height:207px;border:3px solid #0a80f4;border-radius:12px"></div>
<div class="a" style="left:402.8px;top:265px;width:64.7px;height:37px;border:3px solid #0a80f4;border-radius:5px"></div>
<div class="a" style="left:915px;top:348px;width:16px;height:184px;background:#efefef"></div>
<svg style="left:919px;top:355px" width="9" height="5"><path d="M0 5H9L4.5 0Z" fill="#333"/></svg>
<div class="a" style="left:915px;top:369px;width:16px;height:45px;background:linear-gradient(90deg,#fdfdfd,#cdcdcd);border:1px solid #c4c4c4"></div>
<div class="a" style="left:920px;top:388px;width:6px;height:1px;background:#777"></div>
<div class="a" style="left:920px;top:390px;width:6px;height:1px;background:#777"></div>
<div class="a" style="left:920px;top:392px;width:6px;height:1px;background:#777"></div>
<svg style="left:919px;top:521px" width="9" height="5"><path d="M0 0H9L4.5 5Z" fill="#333"/></svg>
<div class="a" style="left:242px;top:534px;width:689px;height:14px;background:#efefef"></div>
<svg style="left:248px;top:538px" width="5" height="8"><path d="M5 0V8L0 4Z" fill="#333"/></svg>
<div class="a" style="left:261.5px;top:534px;width:626px;height:13px;background:linear-gradient(#f6f6f6,#d0d0d0);border:1px solid #c8c8c8;border-top:none"></div>
<div class="a" style="left:572px;top:538px;width:1px;height:6px;background:#777"></div>
<div class="a" style="left:574px;top:538px;width:1px;height:6px;background:#777"></div>
<div class="a" style="left:576px;top:538px;width:1px;height:6px;background:#777"></div>
<svg style="left:902px;top:538px" width="5" height="8"><path d="M0 0V8L5 4Z" fill="#333"/></svg>
<div class="a" style="left:915px;top:532px;width:16px;height:16px;background:#e9e9e9"></div>
<div class="a" style="left:19px;top:85px;width:199px;height:326px;overflow:hidden">
<div class="a" style="left:9px;top:0px;width:1px;height:326px;background:repeating-linear-gradient(#dadada 0 2px,transparent 2px 3px)"></div>
<div class="a" style="left:25px;top:50px;width:1px;height:276px;background:repeating-linear-gradient(#dadada 0 2px,transparent 2px 3px)"></div>
<div class="a" style="left:41px;top:90px;width:1px;height:236px;background:repeating-linear-gradient(#dadada 0 2px,transparent 2px 3px)"></div>
<div class="a" style="left:57px;top:130px;width:1px;height:196px;background:repeating-linear-gradient(#dadada 0 2px,transparent 2px 3px)"></div>
<div class="a" style="left:9px;top:2px;width:7px;height:1px;background:repeating-linear-gradient(90deg,#d6d6d6 0 1px,transparent 1px 2px)"></div>
<svg style="left:16px;top:-7px" width="17" height="16" viewBox="0 0 17 16"><rect x="5.5" y="0.5" width="11" height="9" fill="#fff" stroke="#808080"/><path d="M5.5 1.6H16.5" stroke="#808080" stroke-width="1.4"/><path d="M9.2 0.5V9.5M12.8 0.5V9.5M5.5 4.2H16.5M5.5 6.8H16.5" stroke="#9a9a9a" stroke-width="0.9"/><path d="M0.7 4.5H5V3.2H7V15.3H0.7Z" fill="#fff" stroke="#808080"/><path d="M0.7 15.3L4.5 8.5H16.3L12.5 15.3Z" fill="#fff" stroke="#808080" stroke-linejoin="round"/></svg>
<div class="t" style="left:36.00px;top:-4.00px;color:#111;letter-spacing:0.123px;">All Inventory</div>
<div class="a" style="left:14px;top:22px;width:3px;height:1px;background:repeating-linear-gradient(90deg,#d6d6d6 0 1px,transparent 1px 2px)"></div>
<svg style="left:5px;top:17px" width="9" height="9" viewBox="0 0 9 9"><rect x="0.5" y="0.5" width="8" height="8" rx="1" fill="url(#gexp)" stroke="#7d8bab"/><path d="M2 4.5H7M4.5 2V7" stroke="#26365f" stroke-width="1"/></svg>
<svg style="left:17px;top:14px" width="16" height="13" viewBox="0 0 16 13"><path d="M0.5 2.5Q0.5 1 2 1H6L7.5 2.5H14Q15.5 2.5 15.5 4V11Q15.5 12.5 14 12.5H2Q0.5 12.5 0.5 11Z" fill="url(#gfold)" stroke="#cfa446"/><path d="M1 4.5H15" stroke="#e9c360" stroke-width="0.8"/></svg>
<div class="t" style="left:36.00px;top:16.00px;color:#111;letter-spacing:-0.251px;">Site</div>
<div class="a" style="left:14px;top:42px;width:3px;height:1px;background:repeating-linear-gradient(90deg,#d6d6d6 0 1px,transparent 1px 2px)"></div>
<svg style="left:5px;top:37px" width="9" height="9" viewBox="0 0 9 9"><rect x="0.5" y="0.5" width="8" height="8" rx="1" fill="url(#gexp)" stroke="#7d8bab"/><path d="M2 4.5H7" stroke="#26365f" stroke-width="1.2"/></svg>
<svg style="left:17px;top:34px" width="16" height="13" viewBox="0 0 16 13"><path d="M1.5 2Q1.5 0.8 2.8 0.8H6.5L8 2.2H13Q14.3 2.2 14.3 3.5V5H1.5Z" fill="#f7e08a" stroke="#cfa446"/><path d="M0.5 5.2H15.5L14 12.2H1.8Z" fill="url(#gfold)" stroke="#cfa446" stroke-linejoin="round"/><path d="M2.2 8.2H13.8" stroke="#e6bc50" stroke-width="0.8"/></svg>
<div class="t" style="left:36.00px;top:36.00px;color:#111;letter-spacing:-0.253px;">Asset</div>
<div class="a" style="left:25px;top:62px;width:7px;height:1px;background:repeating-linear-gradient(90deg,#d6d6d6 0 1px,transparent 1px 2px)"></div>
<svg style="left:32px;top:53px" width="17" height="16" viewBox="0 0 17 16"><rect x="5.5" y="0.5" width="11" height="9" fill="#fff" stroke="#808080"/><path d="M5.5 1.6H16.5" stroke="#808080" stroke-width="1.4"/><path d="M9.2 0.5V9.5M12.8 0.5V9.5M5.5 4.2H16.5M5.5 6.8H16.5" stroke="#9a9a9a" stroke-width="0.9"/><path d="M0.7 4.5H5V3.2H7V15.3H0.7Z" fill="#fff" stroke="#808080"/><path d="M0.7 15.3L4.5 8.5H16.3L12.5 15.3Z" fill="#fff" stroke="#808080" stroke-linejoin="round"/></svg>
<div class="t" style="left:52.00px;top:56.00px;color:#111;letter-spacing:-0.563px;">All</div>
<div class="a" style="left:30px;top:82px;width:3px;height:1px;background:repeating-linear-gradient(90deg,#d6d6d6 0 1px,transparent 1px 2px)"></div>
<svg style="left:21px;top:77px" width="9" height="9" viewBox="0 0 9 9"><rect x="0.5" y="0.5" width="8" height="8" rx="1" fill="url(#gexp)" stroke="#7d8bab"/><path d="M2 4.5H7" stroke="#26365f" stroke-width="1.2"/></svg>
<svg style="left:33px;top:74px" width="16" height="13" viewBox="0 0 16 13"><path d="M1.5 2Q1.5 0.8 2.8 0.8H6.5L8 2.2H13Q14.3 2.2 14.3 3.5V5H1.5Z" fill="#f7e08a" stroke="#cfa446"/><path d="M0.5 5.2H15.5L14 12.2H1.8Z" fill="url(#gfold)" stroke="#cfa446" stroke-linejoin="round"/><path d="M2.2 8.2H13.8" stroke="#e6bc50" stroke-width="0.8"/></svg>
<div class="t" style="left:52.00px;top:76.00px;color:#111;letter-spacing:-0.364px;">Device</div>
<div class="a" style="left:41px;top:101px;width:7px;height:1px;background:repeating-linear-gradient(90deg,#d6d6d6 0 1px,transparent 1px 2px)"></div>
<svg style="left:48px;top:92px" width="17" height="16" viewBox="0 0 17 16"><rect x="5.5" y="0.5" width="11" height="9" fill="#fff" stroke="#808080"/><path d="M5.5 1.6H16.5" stroke="#808080" stroke-width="1.4"/><path d="M9.2 0.5V9.5M12.8 0.5V9.5M5.5 4.2H16.5M5.5 6.8H16.5" stroke="#9a9a9a" stroke-width="0.9"/><path d="M0.7 4.5H5V3.2H7V15.3H0.7Z" fill="#fff" stroke="#808080"/><path d="M0.7 15.3L4.5 8.5H16.3L12.5 15.3Z" fill="#fff" stroke="#808080" stroke-linejoin="round"/></svg>
<div class="t" style="left:68.00px;top:95.00px;color:#111;letter-spacing:-0.563px;">All</div>
<div class="a" style="left:46px;top:121px;width:3px;height:1px;background:repeating-linear-gradient(90deg,#d6d6d6 0 1px,transparent 1px 2px)"></div>
<svg style="left:37px;top:116px" width="9" height="9" viewBox="0 0 9 9"><rect x="0.5" y="0.5" width="8" height="8" rx="1" fill="url(#gexp)" stroke="#7d8bab"/><path d="M2 4.5H7" stroke="#26365f" stroke-width="1.2"/></svg>
<svg style="left:49px;top:113px" width="16" height="13" viewBox="0 0 16 13"><path d="M1.5 2Q1.5 0.8 2.8 0.8H6.5L8 2.2H13Q14.3 2.2 14.3 3.5V5H1.5Z" fill="#f7e08a" stroke="#cfa446"/><path d="M0.5 5.2H15.5L14 12.2H1.8Z" fill="url(#gfold)" stroke="#cfa446" stroke-linejoin="round"/><path d="M2.2 8.2H13.8" stroke="#e6bc50" stroke-width="0.8"/></svg>
<div class="t" style="left:68.00px;top:115.00px;color:#111;letter-spacing:-0.169px;">Electrical Device</div>
<div class="a" style="left:57px;top:141px;width:7px;height:1px;background:repeating-linear-gradient(90deg,#d6d6d6 0 1px,transparent 1px 2px)"></div>
<svg style="left:64px;top:132px" width="17" height="16" viewBox="0 0 17 16"><rect x="5.5" y="0.5" width="11" height="9" fill="#fff" stroke="#808080"/><path d="M5.5 1.6H16.5" stroke="#808080" stroke-width="1.4"/><path d="M9.2 0.5V9.5M12.8 0.5V9.5M5.5 4.2H16.5M5.5 6.8H16.5" stroke="#9a9a9a" stroke-width="0.9"/><path d="M0.7 4.5H5V3.2H7V15.3H0.7Z" fill="#fff" stroke="#808080"/><path d="M0.7 15.3L4.5 8.5H16.3L12.5 15.3Z" fill="#fff" stroke="#808080" stroke-linejoin="round"/></svg>
<div class="t" style="left:84.00px;top:135.00px;color:#111;letter-spacing:-0.563px;">All</div>
<div class="a" style="left:57px;top:161px;width:7px;height:1px;background:repeating-linear-gradient(90deg,#d6d6d6 0 1px,transparent 1px 2px)"></div>
<svg style="left:64.5px;top:153.5px" width="16" height="12.5" viewBox="0 0 16 13"><rect x="0.5" y="0.5" width="15" height="12" fill="#fff" stroke="#7e7e7e"/><path d="M0.5 1.5H15.5" stroke="#7e7e7e" stroke-width="2"/><path d="M5.5 1V12.5M10.5 1V12.5M1 5H15.5M1 8.7H15.5" stroke="#8e8e8e" stroke-width="1"/></svg>
<div class="t" style="left:84.00px;top:155.00px;color:#111;letter-spacing:0.010px;">Lighting</div>
<div class="a" style="left:57px;top:181px;width:7px;height:1px;background:repeating-linear-gradient(90deg,#d6d6d6 0 1px,transparent 1px 2px)"></div>
<svg style="left:64.5px;top:173.5px" width="16" height="12.5" viewBox="0 0 16 13"><rect x="0.5" y="0.5" width="15" height="12" fill="#fff" stroke="#7e7e7e"/><path d="M0.5 1.5H15.5" stroke="#7e7e7e" stroke-width="2"/><path d="M5.5 1V12.5M10.5 1V12.5M1 5H15.5M1 8.7H15.5" stroke="#8e8e8e" stroke-width="1"/></svg>
<div class="t" style="left:84.00px;top:175.00px;color:#111;letter-spacing:-0.319px;">Generic</div>
<div class="a" style="left:46px;top:201px;width:3px;height:1px;background:repeating-linear-gradient(90deg,#d6d6d6 0 1px,transparent 1px 2px)"></div>
<svg style="left:37px;top:196px" width="9" height="9" viewBox="0 0 9 9"><rect x="0.5" y="0.5" width="8" height="8" rx="1" fill="url(#gexp)" stroke="#7d8bab"/><path d="M2 4.5H7" stroke="#26365f" stroke-width="1.2"/></svg>
<svg style="left:49px;top:193px" width="16" height="13" viewBox="0 0 16 13"><path d="M1.5 2Q1.5 0.8 2.8 0.8H6.5L8 2.2H13Q14.3 2.2 14.3 3.5V5H1.5Z" fill="#f7e08a" stroke="#cfa446"/><path d="M0.5 5.2H15.5L14 12.2H1.8Z" fill="url(#gfold)" stroke="#cfa446" stroke-linejoin="round"/><path d="M2.2 8.2H13.8" stroke="#e6bc50" stroke-width="0.8"/></svg>
<div class="t" style="left:68.00px;top:195.00px;color:#111;letter-spacing:-0.242px;">HVAC Device</div>
<div class="a" style="left:57px;top:221px;width:7px;height:1px;background:repeating-linear-gradient(90deg,#d6d6d6 0 1px,transparent 1px 2px)"></div>
<svg style="left:64px;top:212px" width="17" height="16" viewBox="0 0 17 16"><rect x="5.5" y="0.5" width="11" height="9" fill="#fff" stroke="#808080"/><path d="M5.5 1.6H16.5" stroke="#808080" stroke-width="1.4"/><path d="M9.2 0.5V9.5M12.8 0.5V9.5M5.5 4.2H16.5M5.5 6.8H16.5" stroke="#9a9a9a" stroke-width="0.9"/><path d="M0.7 4.5H5V3.2H7V15.3H0.7Z" fill="#fff" stroke="#808080"/><path d="M0.7 15.3L4.5 8.5H16.3L12.5 15.3Z" fill="#fff" stroke="#808080" stroke-linejoin="round"/></svg>
<div class="t" style="left:84.00px;top:215.00px;color:#111;letter-spacing:-0.563px;">All</div>
<div class="a" style="left:57px;top:240px;width:7px;height:1px;background:repeating-linear-gradient(90deg,#d6d6d6 0 1px,transparent 1px 2px)"></div>
<svg style="left:64.5px;top:232.5px" width="16" height="12.5" viewBox="0 0 16 13"><rect x="0.5" y="0.5" width="15" height="12" fill="#fff" stroke="#7e7e7e"/><path d="M0.5 1.5H15.5" stroke="#7e7e7e" stroke-width="2"/><path d="M5.5 1V12.5M10.5 1V12.5M1 5H15.5M1 8.7H15.5" stroke="#8e8e8e" stroke-width="1"/></svg>
<div class="t" style="left:84.00px;top:234.00px;color:#111;letter-spacing:-0.003px;">Heater</div>
<div class="a" style="left:57px;top:260px;width:7px;height:1px;background:repeating-linear-gradient(90deg,#d6d6d6 0 1px,transparent 1px 2px)"></div>
<svg style="left:64.5px;top:252.5px" width="16" height="12.5" viewBox="0 0 16 13"><rect x="0.5" y="0.5" width="15" height="12" fill="#fff" stroke="#7e7e7e"/><path d="M0.5 1.5H15.5" stroke="#7e7e7e" stroke-width="2"/><path d="M5.5 1V12.5M10.5 1V12.5M1 5H15.5M1 8.7H15.5" stroke="#8e8e8e" stroke-width="1"/></svg>
<div class="t" style="left:84.00px;top:254.00px;color:#111;letter-spacing:-0.319px;">Generic</div>
<div class="a" style="left:46px;top:280px;width:3px;height:1px;background:repeating-linear-gradient(90deg,#d6d6d6 0 1px,transparent 1px 2px)"></div>
<svg style="left:37px;top:275px" width="9" height="9" viewBox="0 0 9 9"><rect x="0.5" y="0.5" width="8" height="8" rx="1" fill="url(#gexp)" stroke="#7d8bab"/><path d="M2 4.5H7M4.5 2V7" stroke="#26365f" stroke-width="1"/></svg>
<svg style="left:49px;top:272px" width="16" height="13" viewBox="0 0 16 13"><path d="M0.5 2.5Q0.5 1 2 1H6L7.5 2.5H14Q15.5 2.5 15.5 4V11Q15.5 12.5 14 12.5H2Q0.5 12.5 0.5 11Z" fill="url(#gfold)" stroke="#cfa446"/><path d="M1 4.5H15" stroke="#e9c360" stroke-width="0.8"/></svg>
<div class="t" style="left:68.00px;top:274.00px;color:#111;letter-spacing:-0.054px;">Conveyor Device</div>
<div class="a" style="left:46px;top:300px;width:3px;height:1px;background:repeating-linear-gradient(90deg,#d6d6d6 0 1px,transparent 1px 2px)"></div>
<svg style="left:37px;top:295px" width="9" height="9" viewBox="0 0 9 9"><rect x="0.5" y="0.5" width="8" height="8" rx="1" fill="url(#gexp)" stroke="#7d8bab"/><path d="M2 4.5H7" stroke="#26365f" stroke-width="1.2"/></svg>
<svg style="left:49px;top:292px" width="16" height="13" viewBox="0 0 16 13"><path d="M1.5 2Q1.5 0.8 2.8 0.8H6.5L8 2.2H13Q14.3 2.2 14.3 3.5V5H1.5Z" fill="#f7e08a" stroke="#cfa446"/><path d="M0.5 5.2H15.5L14 12.2H1.8Z" fill="url(#gfold)" stroke="#cfa446" stroke-linejoin="round"/><path d="M2.2 8.2H13.8" stroke="#e6bc50" stroke-width="0.8"/></svg>
<div class="t" style="left:68.00px;top:294.00px;color:#111;letter-spacing:-0.021px;">Plumbing Sanitation Device</div>
<div class="a" style="left:57px;top:320px;width:7px;height:1px;background:repeating-linear-gradient(90deg,#d6d6d6 0 1px,transparent 1px 2px)"></div>
<svg style="left:64px;top:311px" width="17" height="16" viewBox="0 0 17 16"><rect x="5.5" y="0.5" width="11" height="9" fill="#fff" stroke="#808080"/><path d="M5.5 1.6H16.5" stroke="#808080" stroke-width="1.4"/><path d="M9.2 0.5V9.5M12.8 0.5V9.5M5.5 4.2H16.5M5.5 6.8H16.5" stroke="#9a9a9a" stroke-width="0.9"/><path d="M0.7 4.5H5V3.2H7V15.3H0.7Z" fill="#fff" stroke="#808080"/><path d="M0.7 15.3L4.5 8.5H16.3L12.5 15.3Z" fill="#fff" stroke="#808080" stroke-linejoin="round"/></svg>
<div class="t" style="left:84.00px;top:314.00px;color:#111;letter-spacing:-0.563px;">All</div>
</div>
<div class="a" style="left:218px;top:85px;width:17px;height:326px;background:#efefef"></div>
<svg style="left:223px;top:91px" width="8" height="5"><path d="M0 5H8L4 0.5Z" fill="#444"/></svg>
<div class="a" style="left:218px;top:116px;width:17px;height:124px;background:linear-gradient(90deg,#fdfdfd,#cbcbcb);border:1px solid #c4c4c4;border-radius:1px"></div>
<div class="a" style="left:223px;top:176px;width:7px;height:1px;background:#777"></div>
<div class="a" style="left:223px;top:178px;width:7px;height:1px;background:#777"></div>
<div class="a" style="left:223px;top:180px;width:7px;height:1px;background:#777"></div>
<svg style="left:223px;top:397px" width="8" height="4"><path d="M0 0H8L4 4Z" fill="#666"/></svg>
<div class="a" style="left:19px;top:411px;width:199px;height:17px;background:#efefef"></div>
<svg style="left:26px;top:416px" width="4" height="8"><path d="M4 0V8L0 4Z" fill="#555"/></svg>
<div class="a" style="left:52px;top:411px;width:137px;height:17px;background:linear-gradient(#f8f8f8,#cfcfcf);border:1px solid #c4c4c4;border-radius:1px"></div>
<div class="a" style="left:116.5px;top:416px;width:1.5px;height:7px;background:#777"></div>
<div class="a" style="left:119.5px;top:416px;width:1.5px;height:7px;background:#777"></div>
<div class="a" style="left:122.5px;top:416px;width:1.5px;height:7px;background:#777"></div>
<svg style="left:206px;top:416px" width="4" height="8"><path d="M0 0V8L4 4Z" fill="#666"/></svg>
<div class="a" style="left:218px;top:411px;width:17px;height:17px;background:#e8e8e8"></div>
<div class="a" style="left:19px;top:430px;width:217px;height:19px;background:linear-gradient(#fae6d0 0,#f9e4cd 11px,#f5cf9f 11px,#f5cf9f 12px,#f7d9b3 12px,#f7d9b3 19px)"></div>
<div class="a" style="left:19px;top:449px;width:217px;height:1px;background:#f2eee9"></div>
<div class="t" style="left:25.60px;top:434.00px;font-size:11px;color:#111;letter-spacing:-0.586px;">Class List</div>
<div class="a" style="left:220px;top:432px;width:15px;height:15px;border:1px solid #bdbdbd;border-radius:3px;background:linear-gradient(#fff,#e6e6e6)"></div>
<svg style="left:223px;top:435px" width="9" height="9"><path d="M4.5 1V8M1 4.5H8" stroke="#8a8a8a" stroke-width="1.3"/></svg>
<div class="a" style="left:19px;top:450px;width:217px;height:19px;background:linear-gradient(#fae6d0 0,#f9e4cd 11px,#f5cf9f 11px,#f5cf9f 12px,#f7d9b3 12px,#f7d9b3 19px)"></div>
<div class="a" style="left:19px;top:469px;width:217px;height:1px;background:#f2eee9"></div>
<div class="t" style="left:25.60px;top:454.00px;font-size:11px;color:#111;letter-spacing:-0.331px;">Processes</div>
<div class="a" style="left:220px;top:452px;width:15px;height:15px;border:1px solid #bdbdbd;border-radius:3px;background:linear-gradient(#fff,#e6e6e6)"></div>
<svg style="left:223px;top:455px" width="9" height="9"><path d="M4.5 1V8M1 4.5H8" stroke="#8a8a8a" stroke-width="1.3"/></svg>
<div class="a" style="left:19px;top:470px;width:217px;height:19px;background:linear-gradient(#fae6d0 0,#f9e4cd 11px,#f5cf9f 11px,#f5cf9f 12px,#f7d9b3 12px,#f7d9b3 19px)"></div>
<div class="a" style="left:19px;top:489px;width:217px;height:1px;background:#f2eee9"></div>
<div class="t" style="left:25.60px;top:474.00px;font-size:11px;color:#111;letter-spacing:0.089px;">Views</div>
<div class="a" style="left:220px;top:472px;width:15px;height:15px;border:1px solid #bdbdbd;border-radius:3px;background:linear-gradient(#fff,#e6e6e6)"></div>
<svg style="left:223px;top:475px" width="9" height="9"><path d="M4.5 1V8M1 4.5H8" stroke="#8a8a8a" stroke-width="1.3"/></svg>
<div class="a" style="left:19px;top:490px;width:217px;height:19px;background:linear-gradient(#fae6d0 0,#f9e4cd 11px,#f5cf9f 11px,#f5cf9f 12px,#f7d9b3 12px,#f7d9b3 19px)"></div>
<div class="a" style="left:19px;top:509px;width:217px;height:1px;background:#f2eee9"></div>
<div class="t" style="left:25.60px;top:494.00px;font-size:11px;color:#111;letter-spacing:-0.251px;">Dashboard</div>
<div class="a" style="left:220px;top:492px;width:15px;height:15px;border:1px solid #bdbdbd;border-radius:3px;background:linear-gradient(#fff,#e6e6e6)"></div>
<svg style="left:223px;top:495px" width="9" height="9"><path d="M4.5 1V8M1 4.5H8" stroke="#8a8a8a" stroke-width="1.3"/></svg>
<div class="a" style="left:19px;top:510px;width:217px;height:19px;background:linear-gradient(#fae6d0 0,#f9e4cd 11px,#f5cf9f 11px,#f5cf9f 12px,#f7d9b3 12px,#f7d9b3 19px)"></div>
<div class="a" style="left:19px;top:529px;width:217px;height:1px;background:#f2eee9"></div>
<div class="t" style="left:25.60px;top:514.00px;font-size:11px;color:#111;letter-spacing:-0.043px;">Report</div>
<div class="a" style="left:220px;top:512px;width:15px;height:15px;border:1px solid #bdbdbd;border-radius:3px;background:linear-gradient(#fff,#e6e6e6)"></div>
<svg style="left:223px;top:515px" width="9" height="9"><path d="M4.5 1V8M1 4.5H8" stroke="#8a8a8a" stroke-width="1.3"/></svg>
<div class="a" style="left:19px;top:530px;width:217px;height:18px;background:linear-gradient(#fae6d0 0,#f9e4cd 11px,#f5cf9f 11px,#f5cf9f 12px,#f7d9b3 12px,#f7d9b3 19px)"></div>
<div class="a" style="left:19px;top:549px;width:217px;height:1px;background:#f2eee9"></div>
<div class="t" style="left:25.60px;top:534.00px;font-size:11px;color:#111;letter-spacing:0.052px;">Utility</div>
<div class="a" style="left:220px;top:532px;width:15px;height:15px;border:1px solid #bdbdbd;border-radius:3px;background:linear-gradient(#fff,#e6e6e6)"></div>
<svg style="left:223px;top:535px" width="9" height="9"><path d="M4.5 1V8M1 4.5H8" stroke="#8a8a8a" stroke-width="1.3"/></svg>
<div class="a" style="left:19px;top:428px;width:217px;height:2px;background:#e6e6e6"></div>
<svg style="left:235px;top:288px" width="7" height="34"><path d="M0.5 3.5L6 0V34L0.5 30.5Z" fill="#e2e2e2"/><path d="M1 4V30" stroke="#cfcfcf"/><path d="M5.5 13V19L2.5 16Z" fill="#333"/></svg>
<div class="a" style="left:13px;top:553px;width:924px;height:1px;background:#e3e3e3"></div>
<div class="t" style="left:26.30px;top:556.00px;font-size:11px;color:#707070;letter-spacing:0.430px;-webkit-text-stroke:0.1px currentColor">www.cmdbuild.org</div>
<div class="t" style="left:423.00px;top:556.00px;font-size:11px;color:#707070;letter-spacing:0.322px;-webkit-text-stroke:0.1px currentColor">Info &amp; Support</div>
<div class="t" style="left:777.00px;top:556.00px;font-size:11px;color:#707070;letter-spacing:0.492px;-webkit-text-stroke:0.1px currentColor">Copyright © Tecnoteca srl</div>
</body></html>
